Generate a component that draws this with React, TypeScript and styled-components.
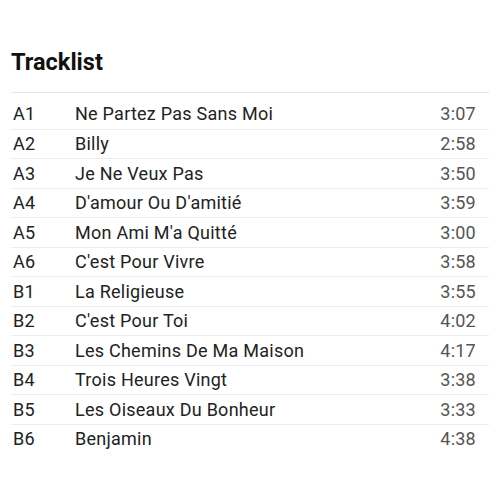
import React from 'react';
import styled, { createGlobalStyle } from 'styled-components';

const GlobalStyle = createGlobalStyle`
  body {
    margin: 0;
    background: #ffffff;
    font-family: Roboto, 'Liberation Sans', sans-serif;
  }
`;

const tracks = [
  { position: 'A1', title: 'Ne Partez Pas Sans Moi', duration: '3:07' },
  { position: 'A2', title: 'Billy', duration: '2:58' },
  { position: 'A3', title: 'Je Ne Veux Pas', duration: '3:50' },
  { position: 'A4', title: "D'amour Ou D'amitié", duration: '3:59' },
  { position: 'A5', title: "Mon Ami M'a Quitté", duration: '3:00' },
  { position: 'A6', title: "C'est Pour Vivre", duration: '3:58' },
  { position: 'B1', title: 'La Religieuse', duration: '3:55' },
  { position: 'B2', title: "C'est Pour Toi", duration: '4:02' },
  { position: 'B3', title: 'Les Chemins De Ma Maison', duration: '4:17' },
  { position: 'B4', title: 'Trois Heures Vingt', duration: '3:38' },
  { position: 'B5', title: 'Les Oiseaux Du Bonheur', duration: '3:33' },
  { position: 'B6', title: 'Benjamin', duration: '4:38' },
];

export default function App() {
  return (
    <>
      <GlobalStyle />
      <Section>
        <Heading>Tracklist</Heading>
        <List>
          {tracks.map((track) => (
            <Track key={track.position}>
              <Position>{track.position}</Position>
              <Title>{track.title}</Title>
              <Duration>{track.duration}</Duration>
            </Track>
          ))}
        </List>
      </Section>
    </>
  );
}

const Section = styled.section`
  padding: 48px 11px 0 11px;
`;

const Heading = styled.h2`
  margin: 0 0 15px 0;
  font-size: 23.5px;
  line-height: 29px;
  font-weight: 700;
  color: #111111;
`;

const List = styled.div`
  border-top: 1px solid #e6e6e6;
  padding-top: 6px;
`;

const Track = styled.div`
  box-sizing: border-box;
  display: flex;
  align-items: center;
  height: 29.5px;
  font-size: 18px;
  letter-spacing: 0.25px;
  color: #222222;
  & + & {
    border-top: 1px solid #ececec;
  }
`;

const Position = styled.span`
  width: 62px;
  padding-left: 2px;
`;

const Title = styled.span`
  flex: 1;
`;

const Duration = styled.span`
  padding-right: 13px;
  color: #555555;
`;
